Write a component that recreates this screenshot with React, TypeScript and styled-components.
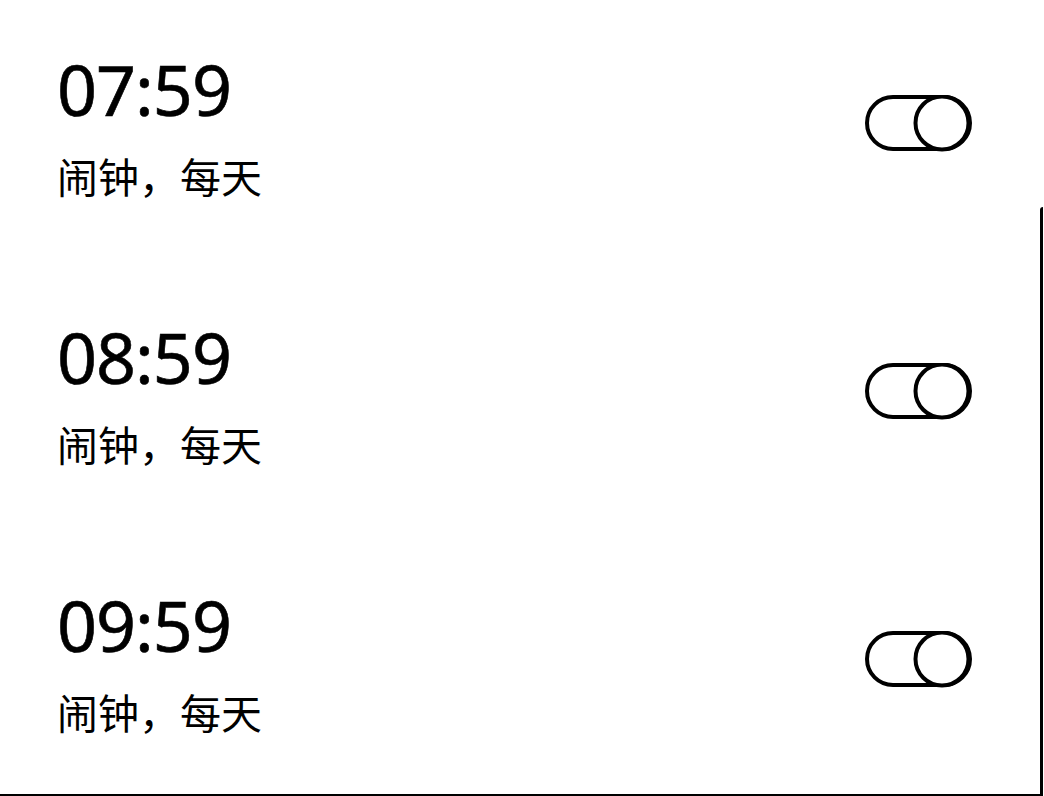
import React from "react";
import styled, { createGlobalStyle } from "styled-components";

const Global = createGlobalStyle`
  html, body { margin: 0; padding: 0; background: #fff; }
  body { font-family: "Noto Sans", "Noto Sans CJK SC", sans-serif; color: #000; }
`;

const Screen = styled.div`
  position: relative;
  width: 1044px;
  height: 796px;
  overflow: hidden;
  background: #fff;
`;

const List = styled.div`
  display: flex;
  flex-direction: column;
  width: 1040px;
  height: 794px;
  border-bottom: 2px solid #000;
  box-sizing: content-box;
`;

const Row = styled.div`
  display: flex;
  align-items: flex-start;
  justify-content: space-between;
  height: 268px;
  padding: 49px 67px 0 57px;
  box-sizing: border-box;
  flex-shrink: 0;
`;

const Info = styled.div`
  display: flex;
  flex-direction: column;
`;

const Time = styled.div`
  font-family: "Noto Sans", sans-serif;
  font-size: 70px;
  line-height: 80px;
  letter-spacing: -1px;
  -webkit-text-stroke: 0.6px #000;
`;

const Label = styled.div`
  font-family: "Noto Sans CJK SC", sans-serif;
  font-size: 41px;
  line-height: 52px;
  margin-top: 20px;
`;

const ToggleBox = styled.svg`
  margin-top: 46px;
  display: block;
`;

const ScrollThumb = styled.div`
  position: absolute;
  right: 1px;
  top: 207px;
  bottom: 0;
  width: 3px;
  background: #000;
  border-top-left-radius: 3px;
`;

function Toggle() {
  return (
    <ToggleBox width="108" height="57" viewBox="0 0 108 57">
      <rect x="2" y="2" width="103" height="52" rx="26" fill="none" stroke="#000" strokeWidth="4" />
      <circle cx="77" cy="28" r="26.5" fill="#fff" stroke="#000" strokeWidth="4" />
    </ToggleBox>
  );
}

const alarms = ["07:59", "08:59", "09:59"];

export default function App() {
  return (
    <>
      <Global />
      <Screen>
        <List>
          {alarms.map((t) => (
            <Row key={t}>
              <Info>
                <Time>{t}</Time>
                <Label>闹钟，每天</Label>
              </Info>
              <Toggle />
            </Row>
          ))}
        </List>
        <ScrollThumb />
      </Screen>
    </>
  );
}
